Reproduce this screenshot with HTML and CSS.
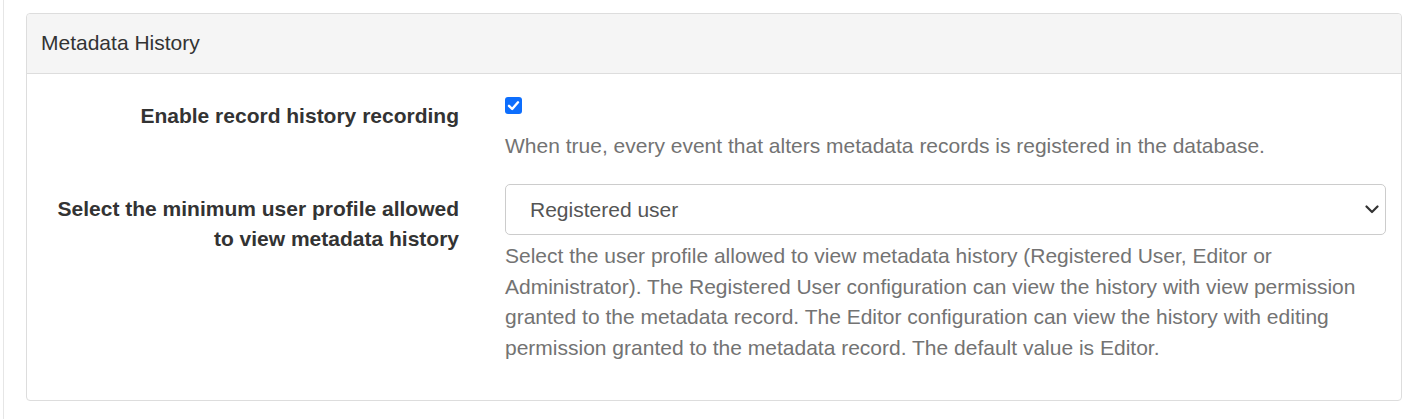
FILE: index.html
```html
<!DOCTYPE html>
<html>
<head>
<meta charset="utf-8">
<link rel="stylesheet" href="styles.css">
</head>
<body>
<div class="page">
  <div class="panel">
    <div class="panel-heading">Metadata History</div>
    <div class="panel-body">
      <div class="row row-check">
        <div class="label">Enable record history recording</div>
        <div class="control">
          <span class="checkbox">
            <svg width="17" height="17" viewBox="0 0 17 17"><rect x="0" y="0" width="17" height="17" rx="3" fill="#0d6efd"/><path d="M4 8.8 L7.2 12 L13 5.3" fill="none" stroke="#fff" stroke-width="2.4" stroke-linecap="round" stroke-linejoin="round"/></svg>
          </span>
          <p class="help">When true, every event that alters metadata records is registered in the database.</p>
        </div>
      </div>
      <div class="row row-select">
        <div class="label label-select">Select the minimum user profile allowed to view metadata history</div>
        <div class="control">
          <div class="select">
            <span>Registered user</span>
            <svg class="chev" width="14" height="9" viewBox="0 0 14 9"><path d="M1.5 1.5 L7 7 L12.5 1.5" fill="none" stroke="#333" stroke-width="2.2" stroke-linecap="round" stroke-linejoin="round"/></svg>
          </div>
          <p class="help help-long">Select the user profile allowed to view metadata history (Registered User, Editor or Administrator). The Registered User configuration can view the history with view permission granted to the metadata record. The Editor configuration can view the history with editing permission granted to the metadata record. The default value is Editor.</p>
        </div>
      </div>
    </div>
  </div>
</div>
</body>
</html>
```
FILE: styles.css
```css
html, body {
  margin: 0;
  padding: 0;
  background: #fff;
}
body {
  font-family: "Liberation Sans", Arial, sans-serif;
  color: #333;
}
.page {
  margin-left: 3px;
  border-left: 1px solid #e6e6e6;
  min-height: 419px;
  box-sizing: border-box;
  padding: 13px 20px 0 22px;
}
.panel {
  border: 1px solid #dddddd;
  border-radius: 4px;
  background: #fff;
  width: 1376px;
  box-sizing: border-box;
}
.panel-heading {
  background: #f5f5f5;
  border-bottom: 1px solid #dddddd;
  border-radius: 4px 4px 0 0;
  height: 60px;
  box-sizing: border-box;
  padding: 14px 14px 0 14px;
  font-size: 21px;
  line-height: 30px;
  color: #333;
}
.panel-body {
  padding: 23px 15px 37px 0;
}
.row {
  display: flex;
  gap: 46px;
}
.label {
  width: 432px;
  flex: none;
  text-align: right;
  font-weight: bold;
  font-size: 21px;
  line-height: 30px;
  color: #333;
  box-sizing: border-box;
}
.row-check .label {
  padding-top: 4px;
}
.label-select {
  padding-top: 10px;
  padding-left: 20px;
}
.control {
  flex: 1;
  min-width: 0;
}
.checkbox {
  display: block;
  width: 17px;
  height: 17px;
  margin-bottom: 17px;
}
.checkbox svg {
  display: block;
}
.help {
  margin: 0;
  font-size: 21px;
  line-height: 30px;
  color: #737373;
}
.row-select {
  margin-top: 23px;
}
.select {
  height: 51px;
  box-sizing: border-box;
  border: 1px solid #cccccc;
  border-radius: 5px;
  display: flex;
  align-items: center;
  justify-content: space-between;
  padding: 0 6px 0 24px;
  font-size: 21px;
  color: #555;
}
.chev {
  display: block;
}
.help-long {
  margin-top: 6px;
  line-height: 30.6px;
  padding-right: 20px;
}
```
